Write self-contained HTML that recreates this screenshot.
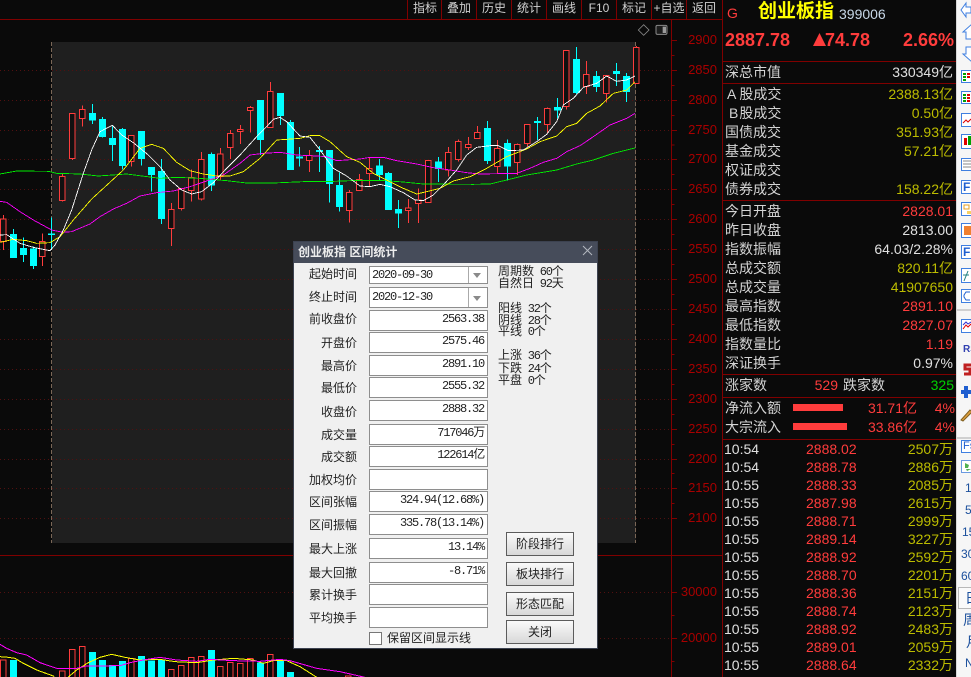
<!DOCTYPE html>
<html><head><meta charset="utf-8"><style>
html,body{margin:0;padding:0;background:#0a0a0a}
#p{position:relative;width:971px;height:677px;overflow:hidden;background:#0a0a0a;font-family:"Liberation Sans","Noto Sans CJK SC",sans-serif;font-size:14px;color:#d4d4d4}
#p div,#p span.a{position:absolute;white-space:nowrap}
.t{top:1px;width:34px;text-align:center;font-size:12px;line-height:15px;color:#d0d0d0}
.ax{width:60px;left:657px;text-align:right;font-size:13px;line-height:14px;color:#a80000}
.l{left:725px;line-height:16px}
.r{right:18px;line-height:16px;text-align:right}
.y{color:#bcbc00}.e{color:#ff3c3c}.w{color:#e0e0e0}
#d{left:293px;top:241px;width:305px;height:408px;background:#f0f0f0;border:1px solid #3c4250;box-sizing:border-box;color:#222}
#d .ti{left:0;top:0;width:303px;height:21px;background:#464c5a;color:#ececec;font-weight:bold;font-size:12px;line-height:21px;padding-left:4px;box-sizing:border-box}
.dl{left:0;width:63px;text-align:right;line-height:16px;font-size:12px}
.in{left:75px;width:119px;height:21px;background:#fff;border:1px solid #8e8e8e;box-sizing:border-box;font-family:"Liberation Mono","Noto Sans CJK SC",monospace;font-size:12px;letter-spacing:-1.2px;line-height:16px;text-align:right;padding-right:3px;color:#222}
.mi{left:204px;font-family:"Liberation Mono","Noto Sans CJK SC",monospace;font-size:12px;line-height:14px;color:#222}
.mi b{font-weight:normal;letter-spacing:-1.2px;margin-left:-1.5px}
.b{left:212px;width:68px;height:24px;border:1px solid #5c5c5c;box-sizing:border-box;background:linear-gradient(#fafafa,#d8d8d8);text-align:center;font-size:12px;line-height:22px;color:#222}
.tb{color:#1b4f9c;font-size:12px;line-height:16px}
</style></head><body><div id="p">

<svg style="position:absolute;left:0;top:0" width="971" height="677" viewBox="0 0 2913 2031">
<rect x="156" y="126" width="1752" height="1503" fill="#1f1f1f"/>
<g fill="none" stroke="#521010" stroke-width="3" stroke-dasharray="3 9" shape-rendering="geometricPrecision">
<path d="M0 211.5H2013M0 301.5H2013M0 391.5H2013M0 478.5H2013M0 568.5H2013M0 658.5H2013M0 748.5H2013M0 838.5H2013M0 928.5H2013M0 1018.5H2013M0 1108.5H2013M0 1198.5H2013M0 1288.5H2013M0 1378.5H2013M0 1465.5H2013M0 1555.5H2013M0 1777.5H2013M0 1915.5H2013"/>
</g>
<g fill="none" stroke="#7a6656" stroke-width="3" stroke-dasharray="12 6" shape-rendering="crispEdges"><path d="M155 126V1629M1907 126V1629"/></g>
<g fill="none" stroke="#800000" stroke-width="3" shape-rendering="crispEdges">
<path d="M0 58H2169M0 1666H2169M2014 58V2031M2168 0V2031"/>
<path d="M2014 121H2031M2014 211H2031M2014 301H2031M2014 391H2031M2014 478H2031M2014 568H2031M2014 658H2031M2014 748H2031M2014 838H2031M2014 928H2031M2014 1018H2031M2014 1108H2031M2014 1198H2031M2014 1288H2031M2014 1378H2031M2014 1465H2031M2014 1555H2031M2014 1777H2031M2014 1915H2031"/>
<path d="M2014 166H2023M2014 256H2023M2014 346H2023M2014 435H2023M2014 523H2023M2014 613H2023M2014 703H2023M2014 793H2023M2014 883H2023M2014 973H2023M2014 1063H2023M2014 1153H2023M2014 1243H2023M2014 1333H2023M2014 1420H2023M2014 1510H2023M2014 1846H2023M2014 1984H2023"/>
</g>
<!-- cyan -->
<g fill="none" stroke="#00ffff" shape-rendering="crispEdges">
<path stroke-width="3" d="M40 687V774M70 712V786M100 740V807M155 653V750M277 312V372M307 351V412M337 380V483M367 384V508M424 393V497M454 501V575M484 477V672M634 457V573M781 300V465M841 279V375M871 360V510M898 441V500M958 438V516M988 450V608M1018 518V635M1138 477V540M1165 516V630M1195 600V684M1315 471V546M1462 363V492M1522 418V542M1612 351V420M1672 294V355M1729 141V282M1789 213V276M1849 189V258M1879 219V306"/>
<path stroke-width="21" d="M40 702V774M70 744V765M100 745V798M155 701V705M277 339V362M307 357V411M337 414V435M367 387V498M424 393V477M454 501V525M484 513V657M634 462V557M781 300V420M841 279V348M871 366V510M898 470V476M958 450V456M988 450V552M1018 555V621M1138 497V525M1165 519V630M1195 627V641M1315 484V507M1462 384V483M1522 429V500M1612 363V369M1672 321V332M1729 177V279M1789 228V261M1849 213V222M1879 228V276"/>
</g>
<!-- red -->
<g fill="none" stroke="#ff3c3c" stroke-width="3" shape-rendering="crispEdges">
<path d="M10 645V750M127 700V798M187 522V605M217 340V480M247 316V380M394 406V500M514 609V738M544 565V632M574 508V605M604 456V602M661 444V540M691 390V477M721 375V432M751 318V398M811 246V383M928 450V516M1048 570V668M1078 522V572M1108 472V560M1225 597V669M1255 565V669M1285 482V608M1345 441V530M1375 418V485M1405 411V450M1432 378V416M1492 420V520M1552 430V525M1582 373V440M1642 322V400M1699 151V328M1759 183V282M1819 226V308M1909 138V250"/>
<path fill="#101010" d="M2 657H18V725H2ZM119 724H135V770H119ZM179 529H195V602H179ZM209 340H225V476H209ZM239 328H255V355H239ZM386 406H402V485H386ZM506 628H522V685H506ZM536 565H552V626H536ZM566 533H582V571H566ZM596 478H612V597H596ZM653 462H669V530H653ZM683 400H699V442H683ZM713 388H729V394H713ZM743 322H759V332H743ZM803 274H819V383H803ZM920 467H936V482H920ZM1040 577H1056V632H1040ZM1070 538H1086V572H1070ZM1100 505H1116V521H1100ZM1217 624H1233V632H1217ZM1247 600H1263V611H1247ZM1277 482H1293V608H1277ZM1337 457H1353V510H1337ZM1367 424H1383V479H1367ZM1397 433H1413V442H1397ZM1424 397H1440V416H1424ZM1484 445H1500V499H1484ZM1544 433H1560V487H1544ZM1574 373H1590V431H1574ZM1634 325H1650V373H1634ZM1691 151H1707V320H1691ZM1751 223H1767V260H1751ZM1811 226H1827V280H1811ZM1901 142H1917V250H1901Z"/>
</g>
<!-- MA lines -->
<g fill="none" stroke-width="2.6" shape-rendering="crispEdges">
<polyline stroke="#00ee00" points="0,522 50,513 145,514 170,520 240,522 295,528 380,522 480,535 530,532 600,535 680,542 740,549 820,549 910,545 1000,544 1080,541 1140,541 1210,546 1270,552 1420,553 1470,552 1520,540 1580,525 1670,510 1730,492 1780,480 1840,460 1905,444"/>
<polyline stroke="#ff00ff" points="0,604 20,607 60,635 100,660 155,690 190,697 215,695 270,672 300,650 340,627 380,610 420,588 470,578 520,573 570,560 620,543 670,525 720,490 750,465 790,460 840,457 890,465 950,468 980,470 1010,482 1080,477 1110,472 1150,472 1190,482 1250,492 1300,503 1350,510 1400,518 1440,522 1550,520 1590,505 1630,487 1670,475 1700,455 1740,437 1780,410 1830,375 1880,355 1905,340"/>
<polyline stroke="#ffff00" points="0,727 40,718 80,722 110,730 150,728 180,710 220,660 275,597 310,565 370,510 420,445 455,433 490,445 530,487 570,512 610,522 650,528 690,528 730,515 780,475 830,420 860,418 900,415 930,407 960,407 990,425 1040,470 1080,487 1120,520 1170,545 1210,565 1250,582 1280,575 1320,565 1360,543 1410,530 1460,505 1520,470 1580,447 1620,425 1670,408 1700,380 1730,370 1760,340 1800,318 1840,280 1880,270 1905,245"/>
<polyline stroke="#ffffff" points="0,705 20,704 60,730 100,742 150,752 165,735 190,690 215,630 250,520 275,450 300,395 337,376 365,405 400,428 445,465 480,500 510,540 545,570 575,582 605,575 640,548 680,505 720,465 770,410 800,380 820,358 840,352 860,365 900,408 930,412 960,450 1000,505 1040,528 1080,558 1110,560 1140,553 1170,560 1210,578 1245,600 1270,602 1300,585 1330,555 1370,510 1400,465 1430,442 1470,437 1495,437 1525,452 1570,450 1610,425 1640,403 1670,365 1690,315 1720,295 1750,262 1790,250 1820,228 1850,244 1880,240 1905,228"/>
</g>
<!-- volume -->
<g shape-rendering="crispEdges">
<path fill="none" stroke="#ff3c3c" stroke-width="3" d="M2 2031V1980H18V2031M179 2031V2013H195V2031M209 2031V1948H225V2031M239 2031V1939H255V2031M386 2031V1975H402V2031M506 2031V2008H522V2031M536 2031V1996H552V2031M566 2031V1972H582V2031M596 2031V1969H612V2031M653 2031V1999H669V2031M683 2031V1988H699V2031M713 2031V1990H729V2031M743 2031V1975H759V2031M803 2031V1963H819V2031M1037 2031V2028H1053V2031"/>
<path fill="none" stroke="#00ffff" stroke-width="21" d="M40 1980V2031M277 1956V2031M307 1980V2031M337 1995V2031M367 1983V2031M424 1968V2031M454 1982V2031M484 1978V2031M634 1950V2031M781 1988V2031M841 1980V2031M871 2016V2031"/>
<polyline fill="none" stroke="#ffff00" stroke-width="3" points="0,1970 25,1972 45,1975 70,1990 110,2010 160,2028 165,2035 200,2035 230,2010 265,1988 300,1972 335,1963 375,1972 420,1980 480,1978 525,1985 590,1988 640,1980 700,1975 760,1980 790,1990 820,1982 860,1982 900,2000 955,2035"/>
<polyline fill="none" stroke="#ff00ff" stroke-width="3" points="0,1933 20,1945 50,1958 80,1965 120,1988 170,2005 230,2005 260,1998 360,1997 390,1988 430,1980 480,1972 530,1980 590,1984 630,1978 700,1982 780,1984 840,1978 870,1982 950,2005 1020,2015 1095,2032"/>
</g>
<path d="M1915 90L1931 74L1947 90L1931 106Z" fill="none" stroke="#8a8a8a" stroke-width="2.5"/>
<rect x="1968" y="76" width="33" height="27" rx="4" fill="#1c1c1c" stroke="#8a8a8a" stroke-width="3"/><rect x="1988" y="80" width="10" height="19" fill="#9a9a9a"/>
</svg>

<div class="t" style="left:408px">指标</div><div class="t" style="left:442px">叠加</div><div class="t" style="left:477px">历史</div><div class="t" style="left:512px">统计</div><div class="t" style="left:547px">画线</div><div class="t" style="left:582px">F10</div><div class="t" style="left:617px">标记</div><div class="t" style="left:652px">+自选</div><div class="t" style="left:687px">返回</div>
<svg style="position:absolute;left:0;top:0" width="722" height="19"><path d="M407.5 0V19M441.5 0V19M476.5 0V19M511.5 0V19M546.5 0V19M581.5 0V19M616.5 0V19M651.5 0V19M686.5 0V19" stroke="#800000"/></svg>

<div class="ax" style="top:33px">2900</div><div class="ax" style="top:63px">2850</div><div class="ax" style="top:93px">2800</div><div class="ax" style="top:123px">2750</div><div class="ax" style="top:152px">2700</div><div class="ax" style="top:182px">2650</div><div class="ax" style="top:212px">2600</div><div class="ax" style="top:242px">2550</div><div class="ax" style="top:272px">2500</div><div class="ax" style="top:302px">2450</div><div class="ax" style="top:332px">2400</div><div class="ax" style="top:362px">2350</div><div class="ax" style="top:392px">2300</div><div class="ax" style="top:422px">2250</div><div class="ax" style="top:452px">2200</div><div class="ax" style="top:481px">2150</div><div class="ax" style="top:511px">2100</div><div class="ax" style="top:585px">30000</div><div class="ax" style="top:631px">20000</div>

<!-- Right panel -->
<svg style="position:absolute;left:722px;top:0" width="235" height="677"><path d="M0 61.5H235M0 83.5H235M0 200.5H235M0 374.5H235M0 397.5H235M0 439.5H235" stroke="#800000"/><rect x="71" y="404" width="50" height="7" fill="#ff3c3c"/><rect x="71" y="423" width="54" height="7" fill="#ff3c3c"/></svg>
<div class="e" style="left:727px;top:5px;line-height:16px;font-size:14px">G</div>
<div style="left:758px;top:0;font-size:19px;line-height:24px;font-weight:bold;color:#ffff00">创业板指</div>
<div style="left:839px;top:6px;line-height:16px;color:#c8d8e8">399006</div>
<div class="e" style="left:725px;top:29px;font-size:18px;line-height:22px;font-weight:bold">2887.78</div>
<svg style="position:absolute;left:813px;top:33px" width="13" height="13"><path d="M6.5 0L13 13H0Z" fill="#ff3c3c"/></svg>
<div class="e" style="left:825px;top:29px;font-size:18px;line-height:22px;font-weight:bold">74.78</div>
<div class="e" style="right:17px;top:29px;font-size:18px;line-height:22px;font-weight:bold">2.66%</div>

<div class="l" style="top:64px">深总市值</div><div class="r w" style="top:64px">330349亿</div>
<div class="l" style="top:86px;left:727px">A<span style="margin-left:3px">股成交</span></div><div class="r y" style="top:86px">2388.13亿</div>
<div class="l" style="top:105px;left:729px">B<span style="margin-left:1px">股成交</span></div><div class="r y" style="top:105px">0.50亿</div>
<div class="l" style="top:124px">国债成交</div><div class="r y" style="top:124px">351.93亿</div>
<div class="l" style="top:143px">基金成交</div><div class="r y" style="top:143px">57.21亿</div>
<div class="l" style="top:162px">权证成交</div>
<div class="l" style="top:181px">债券成交</div><div class="r y" style="top:181px">158.22亿</div>
<div class="l" style="top:203px">今日开盘</div><div class="r e" style="top:203px">2828.01</div>
<div class="l" style="top:222px">昨日收盘</div><div class="r w" style="top:222px">2813.00</div>
<div class="l" style="top:241px">指数振幅</div><div class="r w" style="top:241px">64.03/2.28%</div>
<div class="l" style="top:260px">总成交额</div><div class="r y" style="top:260px">820.11亿</div>
<div class="l" style="top:279px">总成交量</div><div class="r y" style="top:279px">41907650</div>
<div class="l" style="top:298px">最高指数</div><div class="r e" style="top:298px">2891.10</div>
<div class="l" style="top:317px">最低指数</div><div class="r e" style="top:317px">2827.07</div>
<div class="l" style="top:336px">指数量比</div><div class="r e" style="top:336px">1.19</div>
<div class="l" style="top:355px">深证换手</div><div class="r w" style="top:355px">0.97%</div>
<div class="l" style="top:377px">涨家数</div><div class="e" style="right:133px;top:377px;line-height:16px">529</div><div style="left:843px;top:377px;line-height:16px">跌家数</div><div style="right:17px;top:377px;line-height:16px;color:#00d000">325</div>
<div class="l" style="top:400px">净流入额</div><div class="e" style="right:54px;top:400px;line-height:16px">31.71亿</div><div class="e" style="right:16px;top:400px;line-height:16px">4%</div>
<div class="l" style="top:419px">大宗流入</div><div class="e" style="right:54px;top:419px;line-height:16px">33.86亿</div><div class="e" style="right:16px;top:419px;line-height:16px">4%</div>

<div class="l w" style="left:724px;top:441px">10:54</div><div class="e" style="left:806px;top:441px;line-height:16px">2888.02</div><div class="r y" style="top:441px">2507万</div>
<div class="l w" style="left:724px;top:459px">10:54</div><div class="e" style="left:806px;top:459px;line-height:16px">2888.78</div><div class="r y" style="top:459px">2886万</div>
<div class="l w" style="left:724px;top:477px">10:55</div><div class="e" style="left:806px;top:477px;line-height:16px">2888.33</div><div class="r y" style="top:477px">2085万</div>
<div class="l w" style="left:724px;top:495px">10:55</div><div class="e" style="left:806px;top:495px;line-height:16px">2887.98</div><div class="r y" style="top:495px">2615万</div>
<div class="l w" style="left:724px;top:513px">10:55</div><div class="e" style="left:806px;top:513px;line-height:16px">2888.71</div><div class="r y" style="top:513px">2999万</div>
<div class="l w" style="left:724px;top:531px">10:55</div><div class="e" style="left:806px;top:531px;line-height:16px">2889.14</div><div class="r y" style="top:531px">3227万</div>
<div class="l w" style="left:724px;top:549px">10:55</div><div class="e" style="left:806px;top:549px;line-height:16px">2888.92</div><div class="r y" style="top:549px">2592万</div>
<div class="l w" style="left:724px;top:567px">10:55</div><div class="e" style="left:806px;top:567px;line-height:16px">2888.70</div><div class="r y" style="top:567px">2201万</div>
<div class="l w" style="left:724px;top:585px">10:55</div><div class="e" style="left:806px;top:585px;line-height:16px">2888.36</div><div class="r y" style="top:585px">2151万</div>
<div class="l w" style="left:724px;top:603px">10:55</div><div class="e" style="left:806px;top:603px;line-height:16px">2888.74</div><div class="r y" style="top:603px">2123万</div>
<div class="l w" style="left:724px;top:621px">10:55</div><div class="e" style="left:806px;top:621px;line-height:16px">2888.92</div><div class="r y" style="top:621px">2483万</div>
<div class="l w" style="left:724px;top:639px">10:55</div><div class="e" style="left:806px;top:639px;line-height:16px">2889.01</div><div class="r y" style="top:639px">2059万</div>
<div class="l w" style="left:724px;top:657px">10:55</div><div class="e" style="left:806px;top:657px;line-height:16px">2888.64</div><div class="r y" style="top:657px">2332万</div>

<!-- Toolbar -->
<div style="left:956px;top:0;width:15px;height:677px;background:#f6f6f6;border-left:1px solid #d8d8d8;box-sizing:border-box;overflow:hidden">
<svg style="position:absolute;left:0;top:0" width="15" height="677" viewBox="957 0 15 677">
<g fill="#fff" stroke="#3f7fe0">
<path d="M971 7H966V3L961 10L966 17V13H971Z"/>
<path d="M972 24L963 32H966V39H972Z"/>
<path d="M972 47H966V54H963L972 62Z"/>
<rect x="961.5" y="70.5" width="12" height="12"/><rect x="961.5" y="91.5" width="12" height="12"/><rect x="961.5" y="113.5" width="12" height="13"/><rect x="961.5" y="134.5" width="12" height="14"/><rect x="961.5" y="158.5" width="12" height="12"/><rect x="961.5" y="180.5" width="12" height="13"/><rect x="961.5" y="202.5" width="12" height="13"/><rect x="961.5" y="223.5" width="12" height="14"/><rect x="961.5" y="245.5" width="12" height="13"/><rect x="961.5" y="268.5" width="12" height="14"/><rect x="961.5" y="289.5" width="12" height="13"/><rect x="961.5" y="319.5" width="12" height="13"/><rect x="961.5" y="440.5" width="12" height="12"/><rect x="961.5" y="460.5" width="12" height="12" stroke="#6a9ae0"/>
</g>
<path d="M963 73h3v2h-3zM963 76h3v2h-3zM963 79h3v2h-3zM963 94h3v2h-3zM963 97h3v2h-3zM963 100h3v2h-3z" fill="#00a000"/>
<path d="M967 73h3v2h-3zM967 76h3v2h-3zM967 94h3v2h-3zM967 97h3v2h-3zM967 100h3v2h-3z" fill="#e00000"/>
<path d="M963 123l3-3 2 2 3-3" fill="none" stroke="#e00000"/>
<path d="M964 138h3v7h-3z" fill="#e00000"/><path d="M968 136h3v9h-3z" fill="#00a000"/>
<path d="M963 161h8M963 164h8M963 167h8" stroke="#888" fill="none"/>
<path d="M964 205h5v4h-5z" fill="#fff" stroke="#e8a020"/><path d="M967 211h4v3h-4z" fill="#f8d060"/>
<rect x="964" y="226" width="7" height="9" fill="#f08030"/>
<path d="M964 281l4-10M963 275h6" stroke="#208080" fill="none"/>
<path d="M970 292h-4l-2 3v2l2 3h4" stroke="#1f5fd0" fill="none"/>
<path d="M963 329l3-4 2 2 3-3" stroke="#e00000" fill="none"/><path d="M963 325l3-3 2 2 3-2" stroke="#3030d0" fill="none"/>
<path d="M957 310h15M957 438h15" stroke="#aaa"/>
<path d="M965 463l4 2-1 3h-3zM971 469l-4 2-1-2" fill="#50b050"/>
<path d="M971 365h-6v4h5v5h-6" stroke="#c02020" stroke-width="3" fill="none"/>
<path d="M961 392h10M966 386v12" stroke="#1f5fd0" stroke-width="4" fill="none"/>
<path d="M961 420l9-10 2 2-9 9z" fill="#e0a040" stroke="#806020"/>
<rect x="958.5" y="587.5" width="16" height="21" fill="#fafafa" stroke="#b8b8b8"/>
</svg>
<div class="tb" style="left:6px;top:342px;font-weight:bold;font-size:10px;color:#3040b0">RS</div>
<div class="tb" style="left:6px;top:179px;font-weight:bold;color:#1f5fd0">Fi</div><div class="tb" style="left:6px;top:244px;font-weight:bold;color:#1f5fd0">Fi</div><div class="tb" style="left:6px;top:438px;font-size:11px;color:#1f5fd0">Fs</div>
<div class="tb" style="left:8px;top:480px">1</div><div class="tb" style="left:8px;top:502px">5</div><div class="tb" style="left:5px;top:524px">15</div><div class="tb" style="left:4px;top:546px">30</div><div class="tb" style="left:4px;top:568px">60</div><div class="tb" style="left:8px;top:590px;font-size:14px">日</div><div class="tb" style="left:6px;top:612px;font-size:14px">周</div><div class="tb" style="left:9px;top:634px;font-size:14px">月</div><div class="tb" style="left:8px;top:655px">N</div>
</div>

<!-- Dialog -->
<div id="d">
<div class="ti">创业板指 区间统计</div>
<svg style="position:absolute;left:288px;top:3px" width="12" height="12"><path d="M1 1L10 10M10 1L1 10" stroke="#b4b8c0"/></svg>
<div class="dl" style="top:24px">起始时间</div>
<div class="in" style="top:24px;height:18px;text-align:left;padding-left:2px;line-height:16px">2020-09-30</div>
<div style="left:174px;top:25px;width:19px;height:16px;border-left:1px solid #aaa"></div>
<div style="left:179px;top:31px;width:0;height:0;border:4px solid transparent;border-top:5px solid #8a8a8a"></div>
<div class="dl" style="top:47px">终止时间</div>
<div class="in" style="top:45px;text-align:left;padding-left:2px;line-height:18px">2020-12-30</div>
<div style="left:174px;top:46px;width:19px;height:19px;border-left:1px solid #aaa"></div>
<div style="left:179px;top:54px;width:0;height:0;border:4px solid transparent;border-top:5px solid #8a8a8a"></div>

<div class="dl" style="top:69px">前收盘价</div><div class="in" style="top:68px">2563.38</div>
<div class="dl" style="top:93px">开盘价</div><div class="in" style="top:90px">2575.46</div>
<div class="dl" style="top:116px">最高价</div><div class="in" style="top:113px">2891.10</div>
<div class="dl" style="top:138px">最低价</div><div class="in" style="top:135px">2555.32</div>
<div class="dl" style="top:162px">收盘价</div><div class="in" style="top:158px">2888.32</div>
<div class="dl" style="top:185px">成交量</div><div class="in" style="top:182px">717046万</div>
<div class="dl" style="top:207px">成交额</div><div class="in" style="top:204px">122614亿</div>
<div class="dl" style="top:230px">加权均价</div><div class="in" style="top:227px"></div>
<div class="dl" style="top:252px">区间张幅</div><div class="in" style="top:249px">324.94(12.68%)</div>
<div class="dl" style="top:275px">区间振幅</div><div class="in" style="top:272px">335.78(13.14%)</div>
<div class="dl" style="top:299px">最大上涨</div><div class="in" style="top:296px">13.14%</div>
<div class="dl" style="top:323px">最大回撤</div><div class="in" style="top:320px">-8.71%</div>
<div class="dl" style="top:345px">累计换手</div><div class="in" style="top:342px"></div>
<div class="dl" style="top:368px">平均换手</div><div class="in" style="top:365px"></div>

<div class="mi" style="top:23px">周期数 <b>60个</b></div>
<div class="mi" style="top:35px">自然日 <b>92天</b></div>
<div class="mi" style="top:60px">阳线 <b>32个</b></div>
<div class="mi" style="top:72px">阴线 <b>28个</b></div>
<div class="mi" style="top:83px">平线 <b>0个</b></div>
<div class="mi" style="top:107px">上涨 <b>36个</b></div>
<div class="mi" style="top:120px">下跌 <b>24个</b></div>
<div class="mi" style="top:132px">平盘 <b>0个</b></div>

<div class="b" style="top:290px">阶段排行</div>
<div class="b" style="top:320px">板块排行</div>
<div class="b" style="top:350px">形态匹配</div>
<div class="b" style="top:378px">关闭</div>

<div style="left:75px;top:390px;width:13px;height:13px;background:#fff;border:1px solid #777;box-sizing:border-box"></div>
<div style="left:93px;top:388px;line-height:16px;font-size:12px">保留区间显示线</div>
</div>
</div></body></html>
